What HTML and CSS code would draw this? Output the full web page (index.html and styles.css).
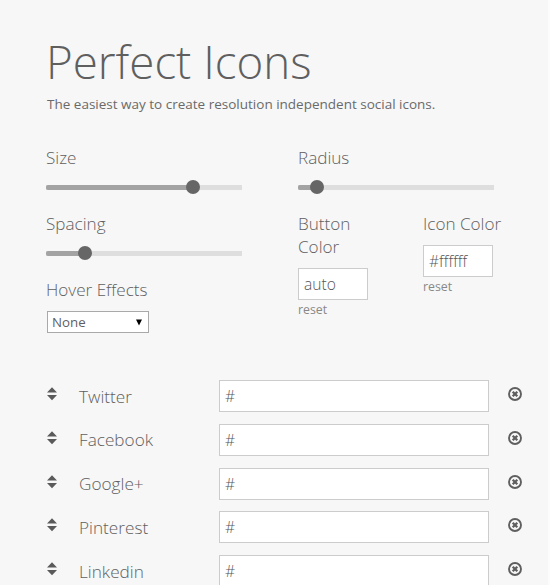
FILE: index.html
```
<!DOCTYPE html>
<html lang="en">
<head>
    <meta charset="UTF-8">
    <meta name="viewport" content="width=device-width, initial-scale=1.0">
    <title>Perfect Icons</title>
    <link rel="stylesheet" href="styles.css">
</head>
<body>
    <svg class="sprite">
        <symbol id="sort" viewBox="0 0 10 14">
            <path d="M5 0.3 L10 5.4 H0 Z M0 8 H10 L5 13.2 Z"/>
        </symbol>
        <symbol id="remove" viewBox="0 0 14 14">
            <circle cx="7" cy="7" r="6" fill="none" stroke="currentColor" stroke-width="1.9"/>
            <path d="M4.7 4.7 L9.3 9.3 M9.3 4.7 L4.7 9.3" fill="none" stroke="currentColor" stroke-width="2.3"/>
        </symbol>
    </svg>

    <div class="container">
        <h1>Perfect Icons</h1>
        <p class="tagline">The easiest way to create resolution independent social icons.</p>

        <div class="settings">
            <div class="col">
                <label>Size</label>
                <div class="slider"><div class="fill" style="width: 75%"></div><div class="thumb"></div></div>
                <label>Spacing</label>
                <div class="slider"><div class="fill" style="width: 19.9%"></div><div class="thumb"></div></div>
                <label>Hover Effects</label>
                <div class="select"><span>None</span><svg width="6" height="7" viewBox="0 0 6 7"><path d="M0 0.5 H6 L3 6.5 Z"/></svg></div>
            </div>
            <div class="col">
                <label>Radius</label>
                <div class="slider"><div class="fill" style="width: 9.7%"></div><div class="thumb"></div></div>
                <div class="colors">
                    <div class="color">
                        <label>Button Color</label>
                        <input type="text" value="auto">
                        <a class="reset">reset</a>
                    </div>
                    <div class="color">
                        <label>Icon Color</label>
                        <input type="text" value="#ffffff">
                        <a class="reset">reset</a>
                    </div>
                </div>
            </div>
        </div>

        <ul class="networks">
            <li>
                <svg class="sort"><use href="#sort"/></svg>
                <span class="name">Twitter</span>
                <input type="text" value="#">
                <svg class="remove"><use href="#remove"/></svg>
            </li>
            <li>
                <svg class="sort"><use href="#sort"/></svg>
                <span class="name">Facebook</span>
                <input type="text" value="#">
                <svg class="remove"><use href="#remove"/></svg>
            </li>
            <li>
                <svg class="sort"><use href="#sort"/></svg>
                <span class="name">Google+</span>
                <input type="text" value="#">
                <svg class="remove"><use href="#remove"/></svg>
            </li>
            <li>
                <svg class="sort"><use href="#sort"/></svg>
                <span class="name">Pinterest</span>
                <input type="text" value="#">
                <svg class="remove"><use href="#remove"/></svg>
            </li>
            <li>
                <svg class="sort"><use href="#sort"/></svg>
                <span class="name">Linkedin</span>
                <input type="text" value="#">
                <svg class="remove"><use href="#remove"/></svg>
            </li>
        </ul>
    </div>
</body>
</html>
```
FILE: styles.css
```
* {
    box-sizing: border-box;
}

body {
    margin: 0;
    height: 585px;
    overflow: hidden;
    border-right: 2px solid #fcfcfc;
    background: #f7f7f7;
    color: #5f5f5f;
    font-family: 'Open Sans', sans-serif;
    font-size: 17.1px;
    font-weight: 300;
    line-height: 23px;
}

/* keep the edge strip from taking the page background */
html {
    background: #f7f7f7;
}

.sprite {
    display: none;
}

.container {
    padding: 31px 0 0 46px;
}

h1 {
    margin: 0;
    font-size: 45.7px;
    font-weight: 300;
    line-height: 60px;
}

.tagline {
    margin: 0;
    padding: 2px 0 0 1px;
    color: #6a6a6a;
    font-size: 13.5px;
    font-weight: 400;
}

.settings {
    display: flex;
    gap: 56px;
    height: 264px;
    padding-top: 30px;
}

.col {
    width: 196px;
}

label {
    display: block;
}

.slider {
    display: flex;
    align-items: center;
    height: 14px;
    margin: 11px 0 18px;
    background: linear-gradient(#dedede, #dedede) center / 100% 5px no-repeat;
}

.fill {
    height: 5px;
    border-radius: 2px 0 0 2px;
    background: #a3a3a3;
}

.thumb {
    flex: none;
    width: 14px;
    height: 14px;
    margin-left: -7px;
    border-radius: 50%;
    background: #666;
}

.select {
    display: flex;
    align-items: center;
    justify-content: space-between;
    width: 102px;
    height: 22px;
    margin: 10px 0 0 1px;
    padding: 0 6px 0 4px;
    border: 1px solid #a9a9a9;
    background: #fff;
    font-size: 13.3px;
    font-weight: 400;
}

.select svg {
    fill: #000;
}

.colors {
    display: flex;
    gap: 45px;
    width: 220px;
}

.color {
    flex: none;
    width: 80px;
}

input {
    display: block;
    height: 32px;
    padding: 0 5px;
    border: 1px solid #ccc;
    border-radius: 0;
    background: #fff;
    color: #555;
    font: 300 15.6px 'Open Sans', sans-serif;
}

.color label {
    margin-bottom: 10px;
}

.color input {
    width: 70px;
}

.reset {
    display: block;
    color: #888;
    font-size: 12.3px;
    font-weight: 400;
    line-height: 19px;
}

.networks {
    margin: 0;
    padding: 0 0 0 1px;
    list-style: none;
    font-size: 17.2px;
}

.networks li {
    display: flex;
    align-items: center;
    height: 32px;
    margin-bottom: 11.8px;
}

.networks input {
    width: 270px;
}

.name {
    width: 140px;
}

.sort {
    width: 10px;
    height: 14px;
    margin: -4px 22px 0 0;
    fill: #5a5a5a;
}

.remove {
    width: 14px;
    height: 14px;
    margin: -4px 0 0 19px;
    color: #5f5f5f;
}
```
